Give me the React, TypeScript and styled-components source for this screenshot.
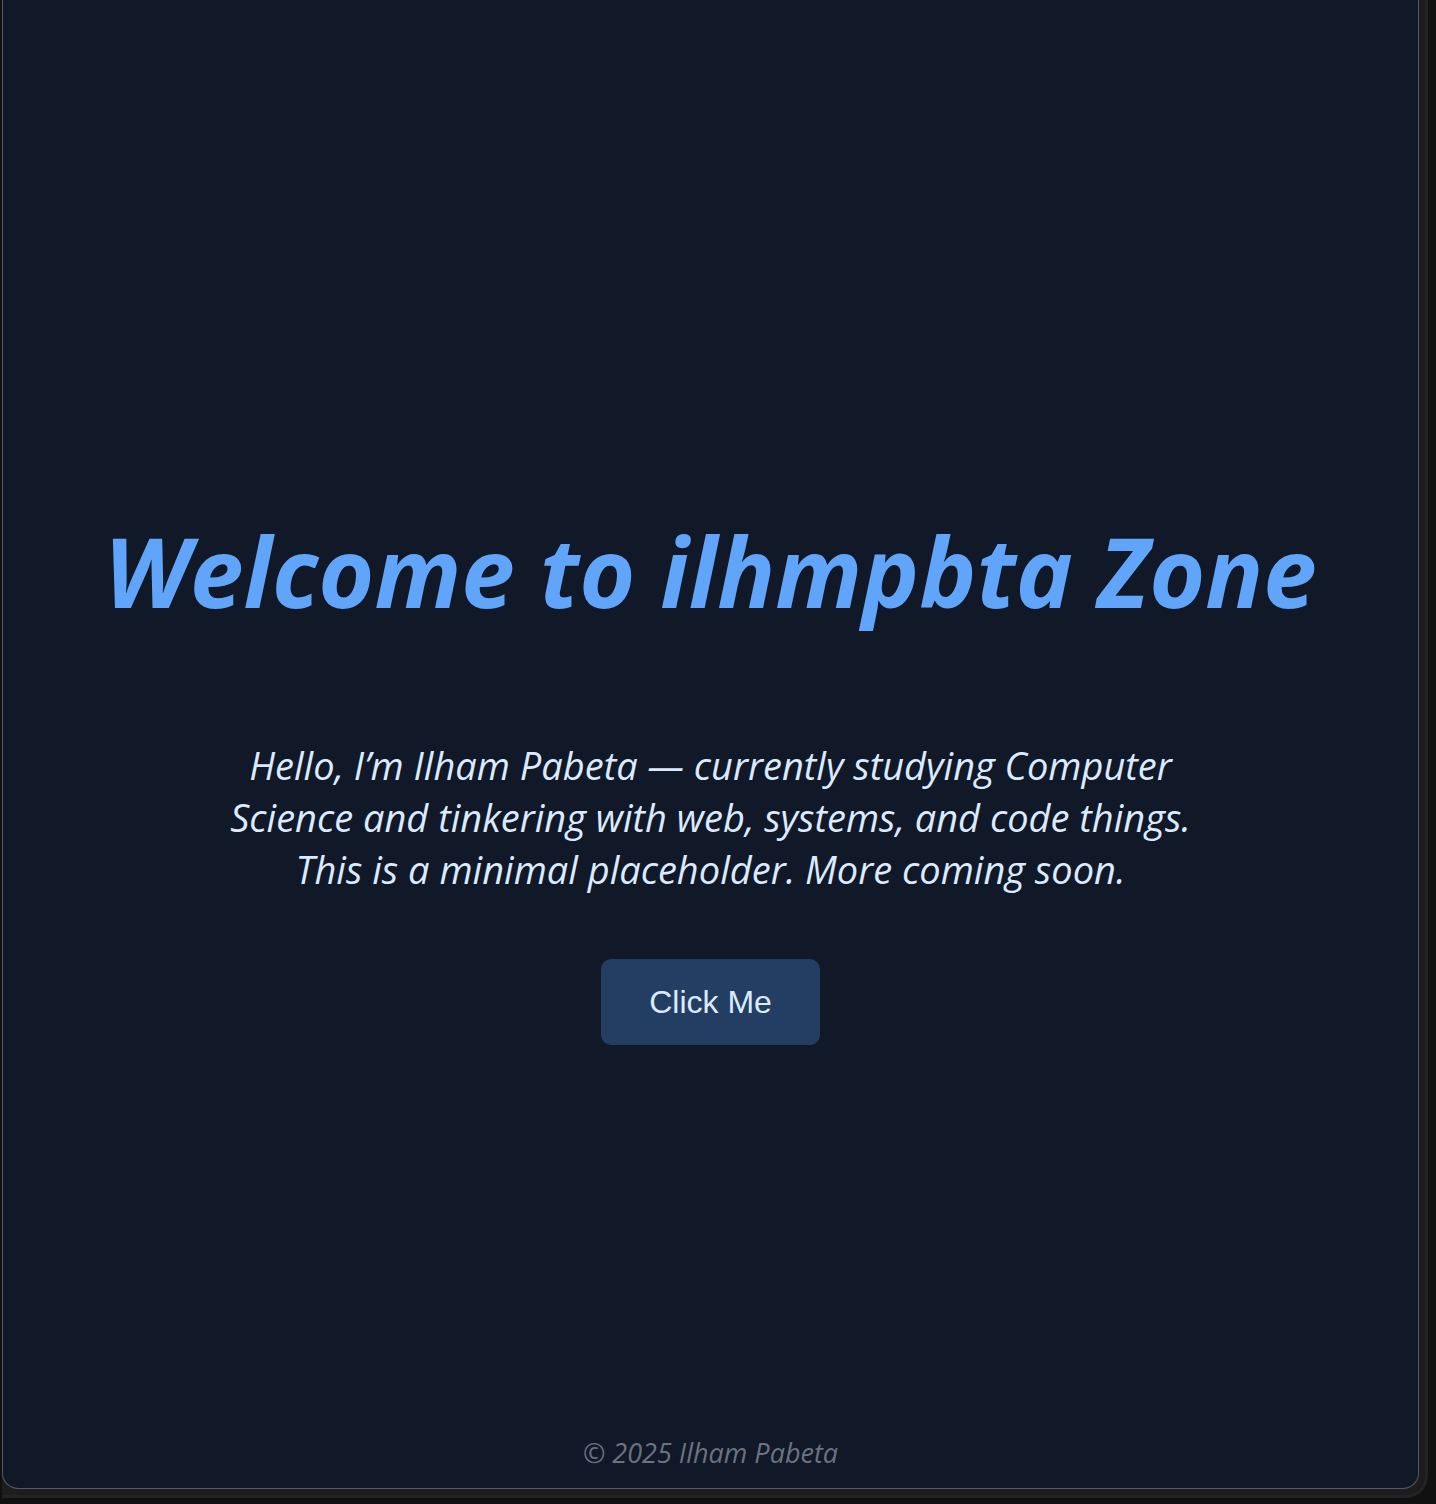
import React from 'react';
import styled, { createGlobalStyle } from 'styled-components';

const GlobalStyle = createGlobalStyle`
  html, body {
    margin: 0;
    padding: 0;
    background: #0d0d0d;
  }
  #root {
    min-height: 1504px;
  }
`;

const Backdrop = styled.div`
  width: 1436px;
  height: 1504px;
  box-sizing: border-box;
  padding: 0 8px 6px 2px;
  background: #111111;
`;

const Frame = styled.div`
  height: 100%;
  box-sizing: border-box;
  padding: 0 6px 6px 0;
  background: #1d1d1d;
  border-right: 3px solid #232323;
  border-bottom: 3px solid #232323;
  border-bottom-right-radius: 22px;
  display: flex;
`;

const Window = styled.div`
  flex: 1;
  display: flex;
  flex-direction: column;
  background: #111827;
  border: 1.5px solid #525a68;
  border-top: none;
  border-radius: 0 0 16px 16px;
  font-family: 'Open Sans', Lato, sans-serif;
  font-style: italic;
`;

const Main = styled.main`
  flex: 1;
  display: flex;
  flex-direction: column;
  align-items: center;
  justify-content: center;
  text-align: center;
  padding: 125px 32px 0;
`;

const Title = styled.h1`
  margin: 0 0 110px;
  font-size: 96px;
  font-weight: 700;
  line-height: 1.2;
  color: #60a5fa;
`;

const Intro = styled.p`
  margin: 0 0 64px;
  font-size: 38px;
  line-height: 52px;
  color: #dbeafe;
`;

const Button = styled.button`
  padding: 19px 48px;
  border: none;
  border-radius: 10px;
  background: #243e63;
  color: #dbeafe;
  font-family: 'Liberation Sans', Arial, sans-serif;
  font-size: 32px;
  line-height: 48px;
  cursor: pointer;
`;

const Footer = styled.footer`
  padding: 0 0 15px;
  text-align: center;
  font-size: 27px;
  line-height: 40px;
  color: #6b7280;
`;

export default function App() {
  return (
    <>
      <GlobalStyle />
      <Backdrop>
        <Frame>
          <Window>
            <Main>
              <Title>Welcome to ilhmpbta Zone</Title>
              <Intro>
                Hello, I’m Ilham Pabeta — currently studying Computer
                <br />
                Science and tinkering with web, systems, and code things.
                <br />
                This is a minimal placeholder. More coming soon.
              </Intro>
              <Button>Click Me</Button>
            </Main>
            <Footer>© 2025 Ilham Pabeta</Footer>
          </Window>
        </Frame>
      </Backdrop>
    </>
  );
}
